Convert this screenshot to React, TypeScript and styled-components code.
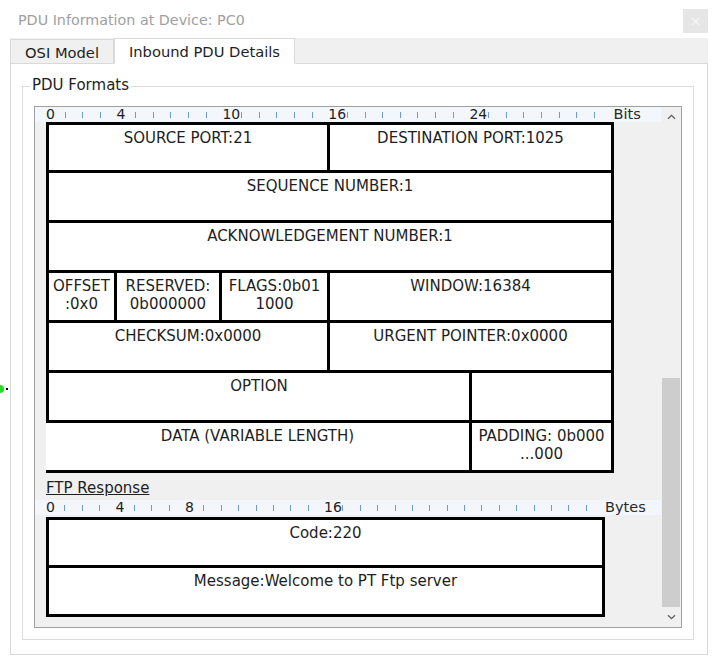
import React from 'react';
import styled, { createGlobalStyle } from 'styled-components';

const GlobalStyle = createGlobalStyle`
  html, body { margin: 0; padding: 0; background: #fff; }
  body { font-family: "DejaVu Sans", "Liberation Sans", sans-serif; color: #1e1e1e; }
  * { box-sizing: border-box; }
`;

const Window = styled.div`
  position: relative;
  width: 718px;
  height: 665px;
  overflow: hidden;
  background: #fff;
`;

const LinkDot = styled.div`
  position: absolute;
  left: -4px;
  top: 385px;
  width: 8px;
  height: 8px;
  border-radius: 50%;
  background: #1fe01f;
  &::after {
    content: '';
    position: absolute;
    left: 10px;
    top: 3px;
    width: 2px;
    height: 2px;
    background: #000;
  }
`;

const TitleBar = styled.div`
  display: flex;
  align-items: flex-start;
  justify-content: space-between;
  height: 38px;
  padding: 9px 10px 0 18px;
`;

const Title = styled.div`
  margin-top: 2px;
  font-size: 14.3px;
  line-height: 18px;
  color: #a0a0a0;
`;

const CloseButton = styled.div`
  width: 25px;
  height: 24px;
  background: #e6e6e6;
  color: #f6f6f6;
  display: flex;
  align-items: center;
  justify-content: center;
  font-size: 14px;
`;

const TabStrip = styled.div`
  display: flex;
  align-items: flex-end;
  height: 26px;
  margin: 0 10px;
  background: #f0f0f0;
  border-bottom: 1px solid #d9d9d9;
`;

const Tab = styled.div<{ $active?: boolean; $w: number }>`
  position: relative;
  z-index: ${p => (p.$active ? 1 : 0)};
  width: ${p => p.$w}px;
  height: ${p => (p.$active ? 26 : 25)}px;
  margin-bottom: -1px;
  padding-top: 4px;
  text-align: center;
  font-size: 14.7px;
  line-height: 18px;
  color: #1e1e1e;
  background: ${p => (p.$active ? '#fff' : '#f0f0f0')};
  border: 1px solid #d9d9d9;
  border-bottom: 1px solid ${p => (p.$active ? '#fff' : '#d9d9d9')};
`;

const Page = styled.div`
  margin: 0 10px;
  height: 591px;
  border: 1px solid #d9d9d9;
  border-top: none;
  background: #fff;
  padding: 22px 0 0 11px;
`;

const GroupBox = styled.div`
  position: relative;
  width: 672px;
  border: 1px solid #dcdcdc;
  padding: 19px 11px 11px 11px;
`;

const Legend = styled.div`
  position: absolute;
  top: -11px;
  left: 7px;
  padding: 0 2px;
  background: #fff;
  font-size: 15px;
  line-height: 18px;
  color: #1e1e1e;
`;

const ScrollPanel = styled.div`
  display: flex;
  height: 522px;
  border: 1px solid #a0a0a0;
  background: #f0f0f0;
`;

const Content = styled.div`
  flex: 1;
  overflow: hidden;
  padding-left: 11px;
`;

const RulerRow = styled.div`
  display: flex;
  height: 15px;
  margin-left: -11px;
  padding-left: 11px;
  background: #f3f6fa;
`;

const RulerCell = styled.div<{ $w: number }>`
  flex: none;
  width: ${p => p.$w}px;
  height: 15px;
  white-space: nowrap;
`;

const RulerLabel = styled.span`
  display: block;
  font-size: 14px;
  line-height: 15px;
  color: #1e1e1e;
`;

const Tick = styled.div`
  width: 1px;
  height: 6px;
  margin: 5px 0 0 1px;
  background: #6d9bd6;
`;

const RulerSuffix = styled.span`
  margin-left: 3px;
  font-size: 14.5px;
  line-height: 15px;
  color: #2a2a2a;
  white-space: nowrap;
`;

const Table = styled.div<{ $w: number }>`
  width: ${p => p.$w}px;
  border-top: 3px solid #000;
`;

const Row = styled.div<{ $h: number }>`
  display: flex;
  height: ${p => p.$h}px;
  border-bottom: 3px solid #000;
`;

const Cell = styled.div<{ $w: number; $left?: boolean }>`
  flex: none;
  width: ${p => p.$w}px;
  border-right: 3px solid #000;
  border-left: ${p => (p.$left ? '3px solid #000' : 'none')};
  background: #fff;
  padding-top: 4px;
  text-align: center;
  font-size: 15px;
  line-height: 18px;
  color: #1e1e1e;
  white-space: nowrap;
`;

const SectionTitle = styled.div`
  margin-top: 6px;
  font-size: 15px;
  line-height: 18px;
  color: #1e1e1e;
  text-decoration: underline;
`;

const FtpRuler = styled(RulerRow)`
  margin-top: 3px;
`;

const FtpTable = styled(Table)`
  margin-top: 2px;
`;

const Scrollbar = styled.div`
  flex: none;
  width: 20px;
  display: flex;
  flex-direction: column;
  background: #f0f0f0;
`;

const ArrowButton = styled.div`
  height: 20px;
  display: flex;
  align-items: center;
  justify-content: center;
`;

const Track = styled.div`
  flex: 1;
  display: flex;
  flex-direction: column;
`;

const Thumb = styled.div`
  margin-top: auto;
  margin-left: 1px;
  width: 18px;
  height: 229px;
  background: #cdcdcd;
`;

type CellDef = { w: number; left?: boolean; lines: string[] };
type RowDef = { h: number; cells: CellDef[] };

const tcpRows: RowDef[] = [
  { h: 48, cells: [{ w: 284, left: true, lines: ['SOURCE PORT:21'] }, { w: 284, lines: ['DESTINATION PORT:1025'] }] },
  { h: 50, cells: [{ w: 568, left: true, lines: ['SEQUENCE NUMBER:1'] }] },
  { h: 50, cells: [{ w: 568, left: true, lines: ['ACKNOWLEDGEMENT NUMBER:1'] }] },
  {
    h: 50,
    cells: [
      { w: 71, left: true, lines: ['OFFSET', ':0x0'] },
      { w: 105, lines: ['RESERVED:', '0b000000'] },
      { w: 108, lines: ['FLAGS:0b01', '1000'] },
      { w: 284, lines: ['WINDOW:16384'] },
    ],
  },
  { h: 50, cells: [{ w: 284, left: true, lines: ['CHECKSUM:0x0000'] }, { w: 284, lines: ['URGENT POINTER:0x0000'] }] },
  { h: 50, cells: [{ w: 426, left: true, lines: ['OPTION'] }, { w: 142, lines: [] }] },
  { h: 50, cells: [{ w: 426, lines: ['DATA (VARIABLE LENGTH)'] }, { w: 142, lines: ['PADDING: 0b000', '...000'] }] },
];

const ftpRows: RowDef[] = [
  { h: 48, cells: [{ w: 559, left: true, lines: ['Code:220'] }] },
  { h: 49, cells: [{ w: 559, left: true, lines: ['Message:Welcome to PT Ftp server'] }] },
];

const RulerCells: React.FC<{ unit: number; labels: Record<number, string> }> = ({ unit, labels }) => (
  <>
    {Array.from({ length: 32 }, (_, i) => (
      <RulerCell key={i} $w={unit}>
        {labels[i] !== undefined ? <RulerLabel>{labels[i]}</RulerLabel> : <Tick />}
      </RulerCell>
    ))}
  </>
);

const Rows: React.FC<{ rows: RowDef[] }> = ({ rows }) => (
  <>
    {rows.map((r, ri) => (
      <Row key={ri} $h={r.h}>
        {r.cells.map((c, ci) => (
          <Cell key={ci} $w={c.w} $left={c.left}>
            {c.lines.map((l, li) => (
              <div key={li}>{l}</div>
            ))}
          </Cell>
        ))}
      </Row>
    ))}
  </>
);

const Chevron: React.FC<{ down?: boolean }> = ({ down }) => (
  <svg width="9" height="6" viewBox="0 0 9 6">
    <path
      d={down ? 'M1 1.2 L4.5 4.7 L8 1.2' : 'M1 4.8 L4.5 1.3 L8 4.8'}
      fill="none"
      stroke="#606060"
      strokeWidth="1.3"
    />
  </svg>
);

export default function App() {
  return (
    <Window>
      <GlobalStyle />
      <LinkDot />
      <TitleBar>
        <Title>PDU Information at Device: PC0</Title>
        <CloseButton>×</CloseButton>
      </TitleBar>
      <TabStrip>
        <Tab $w={104}>OSI Model</Tab>
        <Tab $w={181} $active>
          Inbound PDU Details
        </Tab>
      </TabStrip>
      <Page>
        <GroupBox>
          <Legend>PDU Formats</Legend>
          <ScrollPanel>
            <Content>
              <RulerRow>
                <RulerCells unit={17.656} labels={{ 0: '0', 4: '4', 10: '10', 16: '16', 24: '24' }} />
                <RulerSuffix>Bits</RulerSuffix>
              </RulerRow>
              <Table $w={568}>
                <Rows rows={tcpRows} />
              </Table>
              <SectionTitle>FTP Response</SectionTitle>
              <FtpRuler>
                <RulerCells unit={17.375} labels={{ 0: '0', 4: '4', 8: '8', 16: '16' }} />
                <RulerSuffix>Bytes</RulerSuffix>
              </FtpRuler>
              <FtpTable $w={559}>
                <Rows rows={ftpRows} />
              </FtpTable>
            </Content>
            <Scrollbar>
              <ArrowButton>
                <Chevron />
              </ArrowButton>
              <Track>
                <Thumb />
              </Track>
              <ArrowButton>
                <Chevron down />
              </ArrowButton>
            </Scrollbar>
          </ScrollPanel>
        </GroupBox>
      </Page>
    </Window>
  );
}
